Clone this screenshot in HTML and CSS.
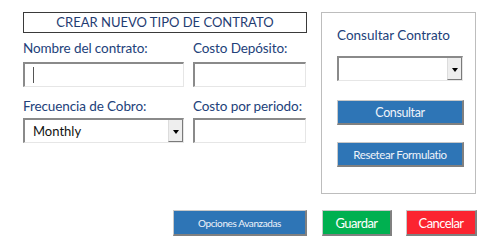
FILE: index.html
```html
<!DOCTYPE html>
<html lang="es">
<head>
<meta charset="utf-8">
<title>Crear nuevo tipo de contrato</title>
<link rel="stylesheet" href="styles.css">
</head>
<body>
<div class="page">
  <div class="top">
    <div class="left">
      <div class="title">CREAR NUEVO TIPO DE CONTRATO</div>
      <div class="grid">
        <div class="label l1">Nombre del contrato:</div>
        <div class="label l1">Costo Depósito:</div>
        <div class="field"><span class="caret"></span></div>
        <div class="field"></div>
        <div class="label l2">Frecuencia de Cobro:</div>
        <div class="label l2">Costo por periodo:</div>
        <div class="field combo"><span class="value">Monthly</span><span class="drop"><span class="tri"></span></span></div>
        <div class="field"></div>
      </div>
    </div>
    <div class="panel">
      <div class="panel-title">Consultar Contrato</div>
      <div class="field combo small"><span class="value"></span><span class="drop"><span class="tri"></span></span></div>
      <div class="btn blue b-consultar">Consultar</div>
      <div class="btn blue b-reset">Resetear Formulatio</div>
    </div>
  </div>
  <div class="actions">
    <div class="btn blue b-opciones">Opciones Avanzadas</div>
    <div class="btn green b-guardar">Guardar</div>
    <div class="btn red b-cancelar">Cancelar</div>
  </div>
</div>
</body>
</html>
```

FILE: styles.css
```css
html, body {
  margin: 0;
  padding: 0;
  background: #ffffff;
}
body {
  font-family: Lato, "Open Sans", sans-serif;
  width: 500px;
  height: 247px;
  overflow: hidden;
}
.page {
  padding: 12px 0 0 23px;
}
.top {
  display: flex;
  gap: 14px;
}
.left {
  width: 284px;
}
.title {
  height: 19px;
  border: 1px solid #3a3a3a;
  color: #1f3c72;
  font-size: 13px;
  line-height: 19px;
  text-align: center;
}
.grid {
  display: grid;
  grid-template-columns: 161px 113px;
  column-gap: 9px;
}
.label {
  color: #22417a;
  font-size: 13.5px;
  letter-spacing: -0.1px;
  line-height: 18px;
  white-space: nowrap;
}
.l1 {
  margin-top: 6px;
  margin-bottom: 5px;
}
.l2 {
  margin-top: 10px;
  margin-bottom: 3px;
}
.field {
  position: relative;
  height: 25px;
  box-sizing: border-box;
  border-top: 2px solid #8a8a8a;
  border-left: 2px solid #8a8a8a;
  border-right: 1px solid #e6e6e6;
  border-bottom: 1px solid #e6e6e6;
  background: #ffffff;
  display: flex;
  align-items: center;
}
.caret {
  display: block;
  width: 1px;
  height: 16px;
  background: #555;
  margin-left: 8px;
}
.combo .value {
  flex: 1;
  padding-left: 8px;
  font-size: 13px;
  color: #111;
}
.drop {
  align-self: stretch;
  width: 13px;
  background: #eeeeee;
  border-left: 1px solid #dcdcdc;
  border-right: 1px solid #7a7a7a;
  border-bottom: 1px solid #7a7a7a;
  display: flex;
  align-items: center;
  justify-content: center;
}
.tri {
  width: 0;
  height: 0;
  border-left: 3px solid transparent;
  border-right: 3px solid transparent;
  border-top: 4px solid #000;
  margin-top: 2px;
}
.panel {
  width: 155px;
  height: 182px;
  box-sizing: border-box;
  border: 1px solid #bdbdbd;
  padding: 0 11px 0 15px;
}
.panel-title {
  margin-top: 13px;
  color: #22417a;
  font-size: 13.5px;
  line-height: 18px;
  white-space: nowrap;
}
.panel .combo {
  margin-top: 12px;
  width: 126px;
}
.btn {
  box-sizing: border-box;
  height: 26px;
  display: flex;
  align-items: center;
  justify-content: center;
  color: #eef3fa;
  border-top: 1px solid #c8c8c8;
  border-left: 1px solid #c8c8c8;
  border-right: 2px solid #808080;
  border-bottom: 2px solid #808080;
  white-space: nowrap;
}
.blue { background: #2e75b6; }
.green { background: #00b050; color: #ffffff; }
.red { background: #fb2430; color: #ffffff; }
.b-consultar {
  margin-top: 19px;
  width: 127px;
  height: 25px;
  font-size: 12.5px;
  letter-spacing: -0.4px;
}
.b-reset {
  margin-top: 17px;
  width: 127px;
  height: 25px;
  font-size: 11.5px;
  letter-spacing: -0.4px;
}
.actions {
  display: flex;
  margin-top: 16px;
  padding-left: 150px;
  gap: 15px;
}
.b-opciones {
  width: 134px;
  font-size: 10px;
  letter-spacing: -0.4px;
}
.b-guardar {
  width: 70px;
  font-size: 13px;
  letter-spacing: -0.6px;
}
.b-cancelar {
  width: 71px;
  font-size: 13px;
  letter-spacing: -0.6px;
  margin-left: -1px;
}
```
